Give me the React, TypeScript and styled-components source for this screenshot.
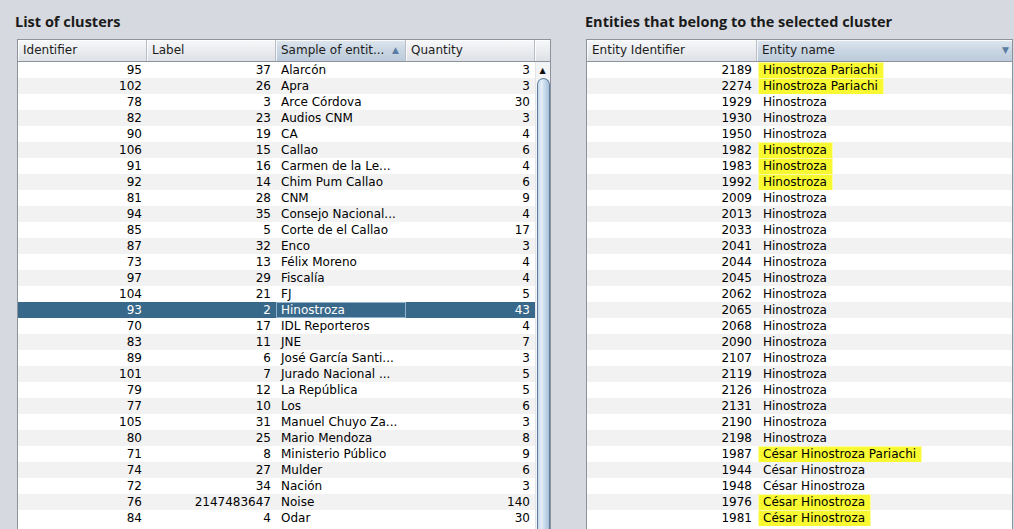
import React from "react";
import styled, { createGlobalStyle } from "styled-components";

const GlobalStyle = createGlobalStyle`
  html, body { margin: 0; padding: 0; }
  body {
    background: #d6d9df;
    font-family: "DejaVu Sans", "Liberation Sans", sans-serif;
    font-size: 12px;
    color: #000;
  }
`;

const Page = styled.div`
  display: flex;
  height: 529px;
  overflow: hidden;
  padding-left: 15px;
  box-sizing: border-box;
`;

const Panel = styled.section<{ $width: number; $gapLeft: number }>`
  display: flex;
  flex-direction: column;
  width: ${(p) => p.$width}px;
  margin-left: ${(p) => p.$gapLeft}px;
  flex-shrink: 0;
`;

const Title = styled.h2<{ $indent: number }>`
  margin: 0;
  height: 39px;
  flex-shrink: 0;
  box-sizing: border-box;
  padding: 12px 0 0 ${(p) => p.$indent}px;
  font-family: "Open Sans", "Lato", sans-serif;
  font-weight: 700;
  font-size: 14.5px;
  line-height: 19px;
  color: #1a1a1a;
`;

const TableBox = styled.div<{ $indent: number }>`
  margin-left: ${(p) => p.$indent}px;
  border: 1px solid #8e939b;
  background: #fff;
  display: flex;
  flex-direction: column;
  flex-shrink: 0;
`;

const HeaderRow = styled.div<{ $cols: string }>`
  display: grid;
  grid-template-columns: ${(p) => p.$cols};
  height: 21px;
  border-bottom: 1px solid #8e939b;
`;

const HeaderCell = styled.div<{ $sorted?: boolean }>`
  position: relative;
  padding-left: 5px;
  line-height: 21px;
  white-space: nowrap;
  overflow: hidden;
  color: #1c1c1c;
  border-right: 1px solid #b9bec6;
  background: ${(p) =>
    p.$sorted
      ? "linear-gradient(#dfe7ef 0%, #cbd7e3 45%, #bccbdb 100%)"
      : "linear-gradient(#f7f8fa 0%, #eceef1 45%, #dde0e5 100%)"};
  box-shadow: inset 1px 1px 0 rgba(255, 255, 255, 0.8);
  &:last-child {
    border-right: none;
  }
`;

const SortArrow = styled.span<{ $right: number }>`
  position: absolute;
  right: ${(p) => p.$right}px;
  top: 0;
  font-size: 9px;
  color: #5b7da3;
  line-height: 21px;
`;

const Body = styled.div`
  display: flex;
`;

const Rows = styled.div`
  display: flex;
  flex-direction: column;
  flex: 1;
  padding-bottom: 24px;
`;

const Row = styled.div<{ $cols: string; $odd: boolean; $selected?: boolean }>`
  display: grid;
  grid-template-columns: ${(p) => p.$cols};
  height: 16px;
  line-height: 16px;
  background: ${(p) => (p.$selected ? "#39698a" : p.$odd ? "#f2f2f2" : "#ffffff")};
  color: ${(p) => (p.$selected ? "#ffffff" : "#000000")};
`;

const Cell = styled.div<{ $num?: boolean; $focus?: boolean; $pad?: number }>`
  white-space: nowrap;
  overflow: hidden;
  text-align: ${(p) => (p.$num ? "right" : "left")};
  padding: ${(p) => (p.$num ? "0 5px 0 0" : `0 0 0 ${p.$pad ?? 5}px`)};
  box-shadow: ${(p) => (p.$focus ? "inset 0 0 0 1px #8fb1cc" : "none")};
`;

const Mark = styled.span<{ $on: boolean }>`
  display: inline-block;
  height: 15px;
  line-height: 15px;
  padding: 0 5px 0 4px;
  background: ${(p) => (p.$on ? "#f9f931" : "transparent")};
  box-shadow: ${(p) => (p.$on ? "0 0 0 1px #fcfca6" : "none")};
`;

const ScrollTrack = styled.div`
  width: 15px;
  background: #f3f4f6;
  border-left: 1px solid #e2e4e8;
  box-sizing: border-box;
  display: flex;
  flex-direction: column;
`;

const ScrollButton = styled.div`
  height: 16px;
  display: flex;
  align-items: center;
  justify-content: center;
  font-size: 8px;
  color: #111;
  padding-right: 1px;
`;

const Thumb = styled.div`
  flex: 1;
  margin: 0 0 0 1px;
  border: 1px solid #5f7e9f;
  border-bottom: none;
  border-radius: 7px 7px 0 0;
  background: linear-gradient(to right, #c4d6e9 0%, #e6eff8 30%, #c8daec 60%, #a9c1da 100%);
`;

type ClusterRow = [number, number, string, number];

const clusters: ClusterRow[] = [
  [95, 37, "Alarcón", 3],
  [102, 26, "Apra", 3],
  [78, 3, "Arce Córdova", 30],
  [82, 23, "Audios CNM", 3],
  [90, 19, "CA", 4],
  [106, 15, "Callao", 6],
  [91, 16, "Carmen de la Le...", 4],
  [92, 14, "Chim Pum Callao", 6],
  [81, 28, "CNM", 9],
  [94, 35, "Consejo Nacional...", 4],
  [85, 5, "Corte de el Callao", 17],
  [87, 32, "Enco", 3],
  [73, 13, "Félix Moreno", 4],
  [97, 29, "Fiscalía", 4],
  [104, 21, "FJ", 5],
  [93, 2, "Hinostroza", 43],
  [70, 17, "IDL Reporteros", 4],
  [83, 11, "JNE", 7],
  [89, 6, "José García Santi...", 3],
  [101, 7, "Jurado Nacional ...", 5],
  [79, 12, "La República", 5],
  [77, 10, "Los", 6],
  [105, 31, "Manuel Chuyo Za...", 3],
  [80, 25, "Mario Mendoza", 8],
  [71, 8, "Ministerio Público", 9],
  [74, 27, "Mulder", 6],
  [72, 34, "Nación", 3],
  [76, 2147483647, "Noise", 140],
  [84, 4, "Odar", 30],
];

type EntityRow = [number, string, boolean];

const entities: EntityRow[] = [
  [2189, "Hinostroza Pariachi", true],
  [2274, "Hinostroza Pariachi", true],
  [1929, "Hinostroza", false],
  [1930, "Hinostroza", false],
  [1950, "Hinostroza", false],
  [1982, "Hinostroza", true],
  [1983, "Hinostroza", true],
  [1992, "Hinostroza", true],
  [2009, "Hinostroza", false],
  [2013, "Hinostroza", false],
  [2033, "Hinostroza", false],
  [2041, "Hinostroza", false],
  [2044, "Hinostroza", false],
  [2045, "Hinostroza", false],
  [2062, "Hinostroza", false],
  [2065, "Hinostroza", false],
  [2068, "Hinostroza", false],
  [2090, "Hinostroza", false],
  [2107, "Hinostroza", false],
  [2119, "Hinostroza", false],
  [2126, "Hinostroza", false],
  [2131, "Hinostroza", false],
  [2190, "Hinostroza", false],
  [2198, "Hinostroza", false],
  [1987, "César Hinostroza Pariachi", true],
  [1944, "César Hinostroza", false],
  [1948, "César Hinostroza", false],
  [1976, "César Hinostroza", true],
  [1981, "César Hinostroza", true],
];

const LEFT_COLS = "129px 129px 130px 129px";
const LEFT_HEAD = "129px 129px 130px 129px 15px";
const RIGHT_COLS = "170px 1fr";

export default function App() {
  return (
    <>
      <GlobalStyle />
      <Page>
        <Panel $width={536} $gapLeft={0}>
          <Title $indent={0}>List of clusters</Title>
          <TableBox $indent={2}>
            <HeaderRow $cols={LEFT_HEAD}>
              <HeaderCell>Identifier</HeaderCell>
              <HeaderCell>Label</HeaderCell>
              <HeaderCell $sorted>
                Sample of entit...
                <SortArrow $right={6}>▲</SortArrow>
              </HeaderCell>
              <HeaderCell>Quantity</HeaderCell>
              <HeaderCell />
            </HeaderRow>
            <Body>
              <Rows>
                {clusters.map(([id, label, sample, qty], i) => {
                  const selected = id === 93;
                  return (
                    <Row key={id} $cols={LEFT_COLS} $odd={i % 2 === 1} $selected={selected}>
                      <Cell $num>{id}</Cell>
                      <Cell $num>{label}</Cell>
                      <Cell $focus={selected}>{sample}</Cell>
                      <Cell $num>{qty}</Cell>
                    </Row>
                  );
                })}
              </Rows>
              <ScrollTrack>
                <ScrollButton>▲</ScrollButton>
                <Thumb />
              </ScrollTrack>
            </Body>
          </TableBox>
        </Panel>
        <Panel $width={428} $gapLeft={34}>
          <Title $indent={0}>Entities that belong to the selected cluster</Title>
          <TableBox $indent={1}>
            <HeaderRow $cols={RIGHT_COLS}>
              <HeaderCell>Entity Identifier</HeaderCell>
              <HeaderCell $sorted>
                Entity name
                <SortArrow $right={3}>▼</SortArrow>
              </HeaderCell>
            </HeaderRow>
            <Rows>
              {entities.map(([id, name, hl], i) => (
                <Row key={id} $cols={RIGHT_COLS} $odd={i % 2 === 1}>
                  <Cell $num>{id}</Cell>
                  <Cell $pad={2}>
                    <Mark $on={hl}>{name}</Mark>
                  </Cell>
                </Row>
              ))}
            </Rows>
          </TableBox>
        </Panel>
      </Page>
    </>
  );
}
